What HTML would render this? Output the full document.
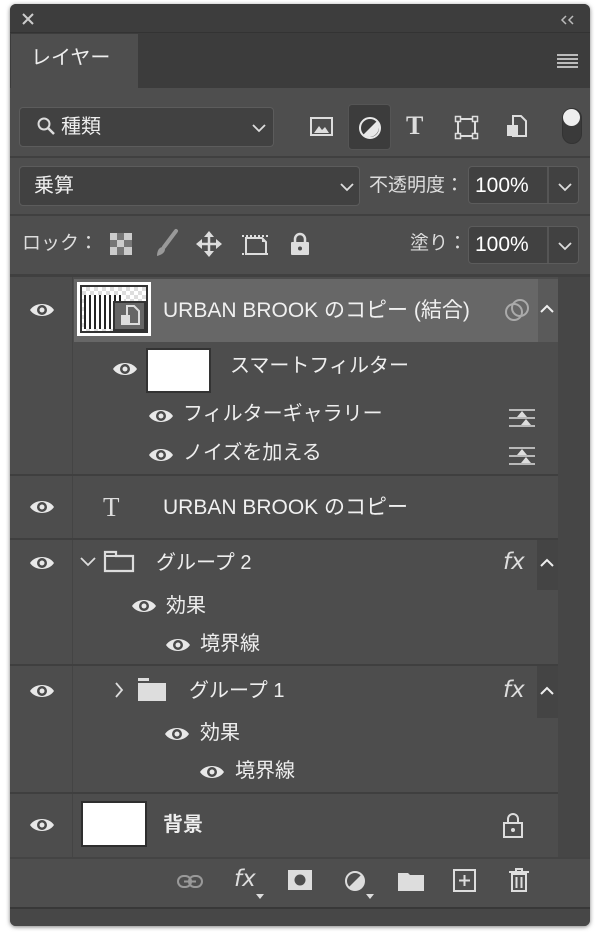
<!DOCTYPE html><html><head><meta charset="utf-8"><style>
*{margin:0;padding:0;box-sizing:border-box}
body{width:600px;height:939px;background:#fff;position:relative;overflow:hidden;font-family:"Liberation Sans","Noto Sans CJK JP",sans-serif;color:#e6e6e6}
.a{position:absolute}
.t{position:absolute;white-space:nowrap;line-height:1}
svg{position:absolute;overflow:visible}
.box{position:absolute;background:#414141;border:1px solid #5c5c5c;border-radius:4px}
</style></head><body>
<div class="a" style="left:10px;top:4px;width:580px;height:922px;background:#4e4e4e;border-radius:6px;box-shadow:0 1px 4px rgba(0,0,0,.5);overflow:hidden">
</div>
<svg width="0" height="0"><defs>
<g id="e"><path d="M0 0C5-8 19-8 24 0C19 8 5 8 0 0z" fill="#e8e8e8"/><circle cx="12" cy="0" r="5" fill="#4a4a4a"/><circle cx="12" cy="0" r="2.5" fill="#e8e8e8"/></g>
<path id="dn" d="M1 1l6 6 6-6" fill="none" stroke="#ddd" stroke-width="1.8"/>
</defs></svg>
<!-- title bar -->
<div class="a" style="left:10px;top:4px;width:580px;height:28px;background:#3d3d3d;border-radius:6px 6px 0 0"></div>
<svg style="left:22px;top:13px" width="12" height="12"><path d="M1 1l10 10M11 1L1 11" stroke="#ccc" stroke-width="2"/></svg>
<svg style="left:561px;top:16px" width="14" height="8"><path d="M5 0L1 4l4 4M12 0L8 4l4 4" fill="none" stroke="#bbb" stroke-width="1.5"/></svg>
<!-- tab row -->
<div class="a" style="left:10px;top:32px;width:580px;height:56px;background:#3c3c3c;border-top:1px solid #333"></div>
<div class="a" style="left:11px;top:34px;width:127px;height:54px;background:#4e4e4e"></div>
<div class="t" style="left:31px;top:48px;font-size:20px;color:#eee">レイヤー</div>
<div class="a" style="left:557px;top:54px;width:21px;height:2px;background:#bbb"></div>
<div class="a" style="left:557px;top:58px;width:21px;height:2px;background:#bbb"></div>
<div class="a" style="left:557px;top:62px;width:21px;height:2px;background:#bbb"></div>
<div class="a" style="left:557px;top:66px;width:21px;height:2px;background:#bbb"></div>
<!-- filter row -->
<div class="box" style="left:19px;top:107px;width:255px;height:40px"></div>
<svg style="left:37px;top:117px" width="20" height="20"><circle cx="7" cy="7" r="5.5" fill="none" stroke="#ddd" stroke-width="2"/><path d="M11 11l6 6" stroke="#ddd" stroke-width="2.5"/></svg>
<div class="t" style="left:61px;top:117px;font-size:20px;color:#eee">種類</div>
<svg style="left:252px;top:124px" width="14" height="8"><use href="#dn"/></svg>
<svg style="left:310px;top:116px" width="24" height="22"><rect x="1" y="2" width="21" height="17" fill="none" stroke="#ddd" stroke-width="2"/><path d="M4 17l5-7 3 4 3-3 4 6z" fill="#ddd"/></svg>
<div class="a" style="left:348px;top:104px;width:43px;height:46px;background:#3c3c3c;border:1px solid #555;border-radius:4px"></div>
<svg style="left:358px;top:116px" width="24" height="24"><circle cx="12" cy="12" r="10" fill="none" stroke="#e8e8e8" stroke-width="2"/><path d="M19 5 A10 10 0 0 1 5 19z" fill="#e8e8e8"/></svg>
<div class="t" style="left:406px;top:113px;font-size:26px;color:#ddd;font-family:'Liberation Serif',serif;font-weight:bold">T</div>
<svg style="left:455px;top:116px" width="24" height="24"><rect x="3" y="3" width="17" height="17" fill="none" stroke="#ddd" stroke-width="2"/><g fill="#4e4e4e" stroke="#ddd" stroke-width="1.5"><rect x="0.5" y="0.5" width="5" height="5"/><rect x="17.5" y="0.5" width="5" height="5"/><rect x="0.5" y="17.5" width="5" height="5"/><rect x="17.5" y="17.5" width="5" height="5"/></g></svg>
<svg style="left:505px;top:115px" width="24" height="24"><path d="M8 1h8l5 5v15h-13z" fill="none" stroke="#ddd" stroke-width="2"/><rect x="2" y="10" width="11" height="11" fill="#ddd"/></svg>
<div class="a" style="left:562px;top:108px;width:20px;height:36px;border-radius:10px;background:#3a3a3a;border:1px solid #333"></div>
<div class="a" style="left:563px;top:109px;width:17px;height:17px;border-radius:50%;background:#eee"></div>
<div class="a" style="left:10px;top:156px;width:580px;height:2px;background:#404040"></div>
<!-- blend row -->
<div class="box" style="left:19px;top:166px;width:341px;height:40px"></div>
<div class="t" style="left:34px;top:176px;font-size:20px;color:#eee">乗算</div>
<svg style="left:340px;top:183px" width="14" height="8"><use href="#dn"/></svg>
<div class="t" style="left:369px;top:176px;font-size:19px;color:#ddd">不透明度：</div>
<div class="box" style="left:468px;top:166px;width:111px;height:38px"></div>
<div class="a" style="left:547px;top:167px;width:2px;height:36px;background:#555"></div>
<div class="t" style="left:475px;top:175px;font-size:21px;color:#fff">100%</div>
<svg style="left:558px;top:183px" width="14" height="8"><use href="#dn"/></svg>
<div class="a" style="left:10px;top:214px;width:580px;height:2px;background:#404040"></div>
<!-- lock row -->
<div class="t" style="left:22px;top:234px;font-size:19px;color:#ddd">ロック：</div>
<svg style="left:110px;top:233px" width="22" height="22"><rect width="22" height="22" fill="#777"/><g fill="#ccc"><rect x="0" y="0" width="7" height="7"/><rect x="14" y="0" width="8" height="7"/><rect x="7" y="7" width="7" height="7"/><rect x="0" y="14" width="7" height="8"/><rect x="14" y="14" width="8" height="8"/></g></svg>
<svg style="left:154px;top:230px" width="24" height="28"><path d="M22 1L10 17" stroke="#999" stroke-width="4" stroke-linecap="round"/><path d="M9 17c-4 0-6 4-6 9 4-1 8-3 8-7z" fill="#999"/></svg>
<svg style="left:196px;top:231px" width="26" height="26"><g stroke="#ddd" stroke-width="2.5"><path d="M13 2v22M2 13h22"/></g><g fill="#ddd"><path d="M13 0l5 6h-10zM13 26l5-6h-10zM0 13l6 5v-10zM26 13l-6 5v-10z"/></g></svg>
<svg style="left:242px;top:232px" width="28" height="24"><path d="M4 6v16h20v-12l-4-4z" fill="none" stroke="#ddd" stroke-width="2"/><path d="M20 6v4h4" fill="#ddd"/><g stroke="#ddd" stroke-width="2" stroke-dasharray="2 2"><path d="M0 4h28M0 22h28"/></g></svg>
<svg style="left:290px;top:232px" width="20" height="24"><path d="M5 11V7a5 5 0 0 1 10 0v4" fill="none" stroke="#ddd" stroke-width="2.5"/><rect x="1" y="10" width="18" height="13" rx="1" fill="#ddd"/><circle cx="10" cy="16.5" r="2" fill="#4e4e4e"/></svg>
<div class="t" style="left:410px;top:234px;font-size:19px;color:#ddd">塗り：</div>
<div class="box" style="left:468px;top:226px;width:111px;height:38px"></div>
<div class="a" style="left:547px;top:227px;width:2px;height:36px;background:#555"></div>
<div class="t" style="left:475px;top:234px;font-size:21px;color:#fff">100%</div>
<svg style="left:558px;top:242px" width="14" height="8"><use href="#dn"/></svg>
<div class="a" style="left:10px;top:274px;width:580px;height:3px;background:#404040"></div>
<!-- list -->
<div class="a" style="left:10px;top:277px;width:548px;height:580px;background:#4d4d4d"></div>
<div class="a" style="left:558px;top:277px;width:32px;height:580px;background:#464646"></div>
<div class="a" style="left:72px;top:277px;width:1px;height:580px;background:#444"></div>
<div class="a" style="left:10px;top:474px;width:548px;height:2px;background:#3f3f3f"></div>
<div class="a" style="left:10px;top:538px;width:548px;height:2px;background:#3f3f3f"></div>
<div class="a" style="left:10px;top:664px;width:548px;height:2px;background:#3f3f3f"></div>
<div class="a" style="left:10px;top:792px;width:548px;height:2px;background:#3f3f3f"></div>
<div class="a" style="left:74px;top:279px;width:464px;height:63px;background:#676767"></div>
<div class="a" style="left:538px;top:279px;width:20px;height:63px;background:#5a5a5a"></div>
<!-- eyes -->
<svg style="left:30px;top:310px" width="24" height="1"><use href="#e"/></svg>
<svg style="left:113px;top:369px" width="24" height="1"><use href="#e"/></svg>
<svg style="left:149px;top:416px" width="24" height="1"><use href="#e"/></svg>
<svg style="left:149px;top:455px" width="24" height="1"><use href="#e"/></svg>
<svg style="left:30px;top:507px" width="24" height="1"><use href="#e"/></svg>
<svg style="left:30px;top:563px" width="24" height="1"><use href="#e"/></svg>
<svg style="left:132px;top:606px" width="24" height="1"><use href="#e"/></svg>
<svg style="left:166px;top:645px" width="24" height="1"><use href="#e"/></svg>
<svg style="left:30px;top:691px" width="24" height="1"><use href="#e"/></svg>
<svg style="left:165px;top:734px" width="24" height="1"><use href="#e"/></svg>
<svg style="left:200px;top:772px" width="24" height="1"><use href="#e"/></svg>
<svg style="left:30px;top:825px" width="24" height="1"><use href="#e"/></svg>
<!-- row1 -->
<div class="a" style="left:77px;top:282px;width:74px;height:54px;background:#fff"></div>
<div class="a" style="left:80px;top:285px;width:68px;height:48px;background:#333"></div>
<div class="a" style="left:82px;top:287px;width:64px;height:44px;background:repeating-conic-gradient(#ddd 0 25%,#fff 0 50%) 0 0/8px 8px"></div>
<div class="a" style="left:84px;top:295px;width:40px;height:34px;background:repeating-linear-gradient(90deg,#222 0 2px,#fff 2px 5px)"></div>
<div class="a" style="left:113px;top:301px;width:33px;height:30px;background:#666;border:2px solid #333"></div>
<svg style="left:120px;top:305px" width="22" height="22"><path d="M7 1h7l5 5v13h-12z" fill="none" stroke="#ddd" stroke-width="2"/><rect x="1" y="10" width="9" height="10" fill="#ddd"/></svg>
<div class="t" style="left:163px;top:300px;font-size:21px;color:#f0f0f0">URBAN BROOK のコピー (結合)</div>
<svg style="left:504px;top:298px" width="26" height="26"><circle cx="10" cy="14" r="8" fill="none" stroke="#aaa" stroke-width="2"/><circle cx="16" cy="10" r="8" fill="none" stroke="#aaa" stroke-width="2"/></svg>
<svg style="left:540px;top:304px" width="14" height="10"><path d="M1 8l6-6 6 6" fill="none" stroke="#eee" stroke-width="2"/></svg>
<!-- smart filter -->
<div class="a" style="left:146px;top:348px;width:65px;height:45px;background:#fff;border:2px solid #333"></div>
<div class="t" style="left:230px;top:356px;font-size:20px;color:#eee">スマートフィルター</div>
<div class="t" style="left:183px;top:404px;font-size:20px;color:#eee">フィルターギャラリー</div>
<div class="t" style="left:183px;top:443px;font-size:20px;color:#eee">ノイズを加える</div>
<svg style="left:509px;top:408px" width="26" height="22"><path d="M0 2h26M0 10h26M0 18h26" stroke="#ddd" stroke-width="1.6"/><path d="M13 3l5 6h-10zM17 11l5 6h-10z" fill="#ddd"/></svg>
<svg style="left:509px;top:446px" width="26" height="22"><path d="M0 2h26M0 10h26M0 18h26" stroke="#ddd" stroke-width="1.6"/><path d="M13 3l5 6h-10zM17 11l5 6h-10z" fill="#ddd"/></svg>
<!-- text layer -->
<div class="t" style="left:103px;top:494px;font-size:27px;color:#ddd;font-family:'Liberation Serif',serif">T</div>
<div class="t" style="left:163px;top:497px;font-size:21px;color:#f0f0f0">URBAN BROOK のコピー</div>
<!-- group 2 -->
<svg style="left:80px;top:557px" width="16" height="10"><path d="M1 1l7 7 7-7" fill="none" stroke="#ddd" stroke-width="1.8"/></svg>
<svg style="left:104px;top:551px" width="30" height="22"><path d="M1 20V1h11v4h17v15z" fill="none" stroke="#ddd" stroke-width="2.2"/><path d="M1 5h28" stroke="#ddd" stroke-width="2"/></svg>
<div class="t" style="left:156px;top:553px;font-size:20px;color:#eee">グループ 2</div>
<div class="t" style="left:503px;top:551px;font-size:23px;color:#ddd;font-style:italic;font-family:'DejaVu Sans',sans-serif">fx</div>
<div class="a" style="left:537px;top:540px;width:21px;height:50px;background:#444"></div>
<svg style="left:540px;top:558px" width="14" height="10"><path d="M1 8l6-6 6 6" fill="none" stroke="#eee" stroke-width="2"/></svg>
<div class="t" style="left:166px;top:596px;font-size:20px;color:#eee">効果</div>
<div class="t" style="left:200px;top:634px;font-size:20px;color:#eee">境界線</div>
<!-- group 1 -->
<svg style="left:114px;top:682px" width="10" height="16"><path d="M2 1l6 7-6 7" fill="none" stroke="#ddd" stroke-width="1.8"/></svg>
<svg style="left:137px;top:678px" width="30" height="24"><rect x="1" y="0" width="11" height="3" fill="#ddd"/><rect x="1" y="5" width="28" height="18" fill="#ddd"/></svg>
<div class="t" style="left:189px;top:681px;font-size:20px;color:#eee">グループ 1</div>
<div class="t" style="left:503px;top:679px;font-size:23px;color:#ddd;font-style:italic;font-family:'DejaVu Sans',sans-serif">fx</div>
<div class="a" style="left:537px;top:666px;width:21px;height:52px;background:#444"></div>
<svg style="left:540px;top:686px" width="14" height="10"><path d="M1 8l6-6 6 6" fill="none" stroke="#eee" stroke-width="2"/></svg>
<div class="t" style="left:200px;top:723px;font-size:20px;color:#eee">効果</div>
<div class="t" style="left:235px;top:761px;font-size:20px;color:#eee">境界線</div>
<!-- background -->
<div class="a" style="left:81px;top:801px;width:66px;height:46px;background:#fff;border:2px solid #2e2e2e"></div>
<div class="t" style="left:163px;top:815px;font-size:20px;color:#eee;font-weight:bold">背景</div>
<svg style="left:502px;top:811px" width="22" height="28"><path d="M6 12V8a5 5 0 0 1 10 0v4" fill="none" stroke="#ddd" stroke-width="2"/><rect x="2" y="12" width="18" height="14" fill="none" stroke="#ddd" stroke-width="2"/><circle cx="11" cy="19" r="2" fill="#ddd"/></svg>
<!-- bottom bar -->
<div class="a" style="left:10px;top:857px;width:580px;height:2px;background:#444"></div>
<div class="a" style="left:10px;top:859px;width:580px;height:48px;background:#4e4e4e"></div>
<div class="a" style="left:10px;top:907px;width:580px;height:19px;background:#474747;border-top:2px solid #383838;border-radius:0 0 6px 6px"></div>
<svg style="left:176px;top:874px" width="30" height="16"><rect x="2" y="2" width="13" height="11" rx="5.5" fill="none" stroke="#999" stroke-width="2"/><rect x="13" y="2" width="13" height="11" rx="5.5" fill="none" stroke="#999" stroke-width="2"/><path d="M8 7.5h12" stroke="#999" stroke-width="2"/></svg>
<div class="t" style="left:234px;top:868px;font-size:23px;color:#ddd;font-style:italic;font-family:'DejaVu Sans',sans-serif">fx</div>
<svg style="left:256px;top:894px" width="8" height="5"><path d="M0 0h8l-4 5z" fill="#ddd"/></svg>
<svg style="left:288px;top:870px" width="24" height="22"><rect x="0" y="0" width="24" height="20" fill="#ddd"/><circle cx="12" cy="10" r="5.5" fill="#4e4e4e"/></svg>
<svg style="left:344px;top:870px" width="32" height="28"><circle cx="11" cy="11" r="9" fill="none" stroke="#ddd" stroke-width="2"/><path d="M17.4 4.6A9 9 0 0 1 4.6 17.4z" fill="#ddd"/><path d="M22 24h8l-4 5z" fill="#ddd"/></svg>
<svg style="left:397px;top:870px" width="28" height="22"><path d="M1 3h10l2 2h14v16h-26z" fill="#ddd"/></svg>
<svg style="left:453px;top:869px" width="24" height="24"><rect x="1" y="1" width="21" height="21" fill="none" stroke="#ddd" stroke-width="2"/><path d="M11.5 6v11M6 11.5h11" stroke="#ddd" stroke-width="2"/></svg>
<svg style="left:508px;top:867px" width="22" height="26"><path d="M1 5h20M8 5V2h6v3" fill="none" stroke="#ddd" stroke-width="2"/><path d="M4 7h14v17h-14z" fill="none" stroke="#ddd" stroke-width="2"/><path d="M8.5 10v11M13.5 10v11" stroke="#ddd" stroke-width="2"/></svg>
</body></html>
